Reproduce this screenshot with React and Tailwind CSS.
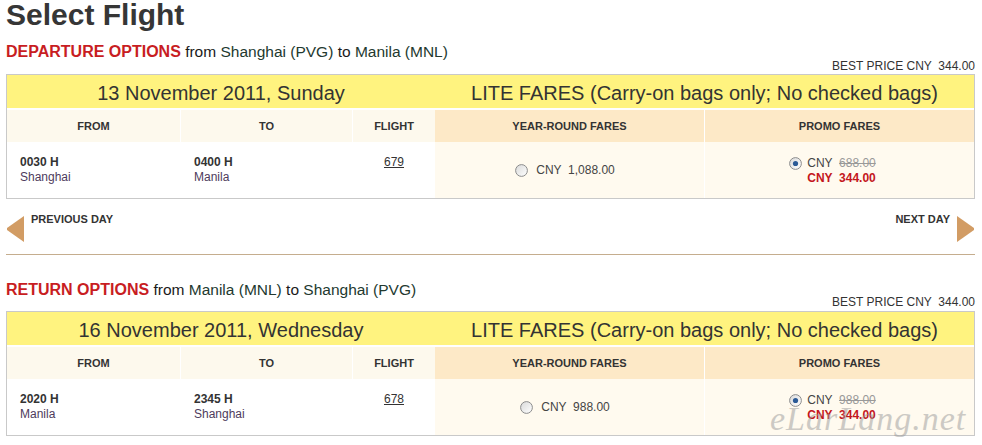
import React from "react";

function Radio({ checked }) {
  return (
    <svg width="13" height="13" viewBox="0 0 13 13" className="shrink-0">
      <defs>
        <linearGradient id="rg" x1="0" y1="0" x2="1" y2="1">
          <stop offset="0" stopColor="#d9d9d9" />
          <stop offset="1" stopColor="#ffffff" />
        </linearGradient>
      </defs>
      <circle cx="6.5" cy="6.5" r="5.9" fill="url(#rg)" stroke="#8c8c8c" strokeWidth="1" />
      {checked && <circle cx="6.5" cy="6.5" r="2.6" fill="#2b5a96" />}
    </svg>
  );
}

function Heading({ label, a, b, className }) {
  return (
    <div className={className}>
      <span className="text-[16px] font-bold text-[#c81d22]">{label}</span>
      <span className="text-[15.5px] text-[#1a1a1a]">
        {" "}from <span className="text-[#23392f]">{a}</span> to{" "}
        <span className="text-[#23392f]">{b}</span>
      </span>
    </div>
  );
}

function BestPrice({ className }) {
  return (
    <div className={className}>
      <span className="whitespace-pre">BEST PRICE CNY  344.00</span>
    </div>
  );
}

function FareTable({ date, fromTime, fromCity, toTime, toCity, flight, year, promoOld }) {
  return (
    <div className="border border-[#c9c9c9] w-[969px]">
      <div className="flex h-[33px] bg-[#fff37f] text-[20px] text-[#333]">
        <div className="w-[428px] text-center pt-[3px] leading-[30px]">{date}</div>
        <div className="flex-1 text-center pt-[3px] leading-[30px]">
          LITE FARES (Carry-on bags only; No checked bags)
        </div>
      </div>
      <div className="flex h-[34px] text-[11px] font-bold text-[#333] leading-[32px] pt-[2px]">
        <div className="w-[174px] bg-[#fdf9ed] border-r border-white text-center">FROM</div>
        <div className="w-[172px] bg-[#fdf9ed] border-r border-white text-center">TO</div>
        <div className="w-[82px] bg-[#fdf9ed] text-center">FLIGHT</div>
        <div className="w-[270px] bg-[#fde9c7] border-r border-white text-center">YEAR-ROUND FARES</div>
        <div className="flex-1 bg-[#fde9c7] text-center">PROMO FARES</div>
      </div>
      <div className="flex h-[56px] text-[12px] leading-[15px] text-[#333]">
        <div className="w-[174px] bg-white border-r border-white pl-[13px] pt-[13px]">
          <div className="font-bold">{fromTime}</div>
          <div className="text-[#4e3b5c]">{fromCity}</div>
        </div>
        <div className="w-[172px] bg-white border-r border-white pl-[13px] pt-[13px]">
          <div className="font-bold">{toTime}</div>
          <div className="text-[#4e3b5c]">{toCity}</div>
        </div>
        <div className="w-[82px] bg-white text-center pt-[13px]">
          <span className="underline">{flight}</span>
        </div>
        <div className="w-[270px] bg-[#fffaef] border-r border-white flex items-center justify-center pr-[9px] text-[#444]">
          <Radio />
          <span className="ml-[8px] whitespace-pre pt-px">{"CNY  " + year}</span>
        </div>
        <div className="flex-1 bg-[#fffaef] flex justify-center pr-[14px] pt-[14px]">
          <div className="mt-px">
            <Radio checked />
          </div>
          <div className="ml-[5px] text-[#444]">
            <div className="whitespace-pre">
              {"CNY  "}
              <span className="line-through text-[#999]">{promoOld}</span>
            </div>
            <div className="whitespace-pre font-bold text-[#c4161c]">CNY  344.00</div>
          </div>
        </div>
      </div>
    </div>
  );
}

function DayNav() {
  return (
    <div className="flex justify-between h-[56px] border-b border-[#c5ad8e] pt-[14px] w-[969px]">
      <div className="flex items-start">
        <svg width="18" height="26" viewBox="0 0 18 26" className="mt-[3px]">
          <polygon points="18,0 18,26 1,14 1,12" fill="#d29c64" />
        </svg>
        <span className="ml-[7px] text-[11px] font-bold leading-[13px] text-[#333]">PREVIOUS DAY</span>
      </div>
      <div className="flex items-start">
        <span className="text-[11px] font-bold leading-[13px] text-[#333]">NEXT DAY</span>
        <svg width="18" height="26" viewBox="0 0 18 26" className="ml-[7px] mt-[3px]">
          <polygon points="0,0 0,26 17,14 17,12" fill="#d29c64" />
        </svg>
      </div>
    </div>
  );
}

export default function App() {
  return (
    <div className="relative w-[982px] h-[445px] bg-white overflow-hidden font-['Liberation_Sans',Arial,sans-serif]">
      <div className="ml-[6px]">
        <div className="text-[30px] leading-[30px] font-bold text-[#363636]">Select Flight</div>
        <Heading
          label="DEPARTURE OPTIONS"
          a="Shanghai (PVG)"
          b="Manila (MNL)"
          className="mt-[13px] leading-[17px]"
        />
        <BestPrice className="text-right text-[12px] leading-[13px] text-[#333] w-[969px]" />
        <div className="mt-px">
          <FareTable
            date="13 November 2011, Sunday"
            fromTime="0030 H"
            fromCity="Shanghai"
            toTime="0400 H"
            toCity="Manila"
            flight="679"
            year="1,088.00"
            promoOld="688.00"
          />
        </div>
        <DayNav />
        <Heading
          label="RETURN OPTIONS"
          a="Manila (MNL)"
          b="Shanghai (PVG)"
          className="mt-[26px] leading-[17px]"
        />
        <BestPrice className="-mt-[2px] text-right text-[12px] leading-[13px] text-[#333] w-[969px]" />
        <div className="mt-[2px]">
          <FareTable
            date="16 November 2011, Wednesday"
            fromTime="2020 H"
            fromCity="Manila"
            toTime="2345 H"
            toCity="Shanghai"
            flight="678"
            year="988.00"
            promoOld="988.00"
          />
        </div>
      </div>
      <div className="absolute left-[770px] top-[399px] text-[34px] leading-[39px] italic font-['Liberation_Serif',serif] text-[#9a9a9a] opacity-50 tracking-[1px] pointer-events-none">
        eLarLang.net
      </div>
    </div>
  );
}
